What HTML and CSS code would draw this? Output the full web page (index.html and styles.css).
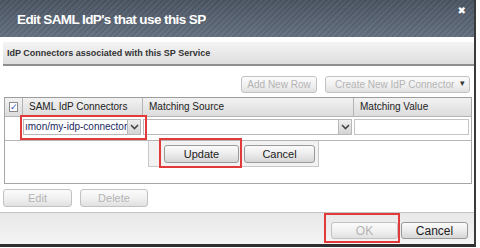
FILE: index.html
```html
<!DOCTYPE html>
<html lang="en">
<head>
  <meta charset="UTF-8">
  <title>Edit SAML IdP's that use this SP</title>
  <link rel="stylesheet" href="styles.css">
</head>
<body>
  <div class="dialog">
    <div class="titlebar">
      <h1>Edit SAML IdP's that use this SP</h1>
      <span class="close">&#x2716;</span>
    </div>

    <div class="content">
      <div class="section-header">IdP Connectors associated with this SP Service</div>

      <div class="toolbar">
        <button class="btn btn-disabled add-row">Add New Row</button>
        <button class="btn btn-disabled create-conn">Create New IdP Connector <span class="caret">&#9662;</span></button>
      </div>

      <div class="grid">
        <div class="grid-row grid-head">
          <div class="cell cell-check"><span class="checkbox">&#10003;</span></div>
          <div class="cell">SAML IdP Connectors</div>
          <div class="cell">Matching Source</div>
          <div class="cell">Matching Value</div>
        </div>
        <div class="grid-row grid-edit">
          <div class="cell cell-check"></div>
          <div class="cell">
            <div class="combo">
              <span class="combo-text">ımon/my-idp-connector</span>
              <span class="combo-arrow"><svg width="9" height="6" viewBox="0 0 9 6"><path d="M1 1 L4.5 4.5 L8 1" fill="none" stroke="#444" stroke-width="1.6"/></svg></span>
            </div>
          </div>
          <div class="cell">
            <div class="combo">
              <span class="combo-text"></span>
              <span class="combo-arrow"><svg width="9" height="6" viewBox="0 0 9 6"><path d="M1 1 L4.5 4.5 L8 1" fill="none" stroke="#444" stroke-width="1.6"/></svg></span>
            </div>
          </div>
          <div class="cell">
            <div class="text-input"></div>
          </div>
        </div>
        <div class="row-editor">
          <button class="btn">Update</button>
          <button class="btn">Cancel</button>
        </div>
      </div>

      <div class="actions">
        <button class="btn btn-disabled small">Edit</button>
        <button class="btn btn-disabled small">Delete</button>
      </div>
    </div>

    <div class="footer">
      <button class="btn btn-disabled footer-btn">OK</button>
      <button class="btn footer-btn">Cancel</button>
    </div>

    <div class="mark mark-select"></div>
    <div class="mark mark-update"></div>
    <div class="mark mark-ok"></div>
  </div>
</body>
</html>
```

FILE: styles.css
```css
* {
  box-sizing: border-box;
  margin: 0;
  padding: 0;
}

body {
  background: #ffffff;
  font-family: "Liberation Sans", Arial, sans-serif;
  width: 480px;
  height: 248px;
  overflow: hidden;
}

.dialog {
  position: relative;
  width: 476px;
  height: 247px;
  background: #ffffff;
  border-right: 2px solid #3a3a3a;
  border-bottom: 3px solid #2f2f2f;
  display: flex;
  flex-direction: column;
}

.titlebar {
  height: 37px;
  display: flex;
  align-items: center;
  justify-content: space-between;
  padding: 0 8px 0 17px;
  background:
    repeating-linear-gradient(135deg, rgba(255,255,255,0.04) 0 2px, rgba(0,0,0,0.04) 2px 4px),
    linear-gradient(#4a5462, #647080);
}

.titlebar h1 {
  color: #ffffff;
  font-size: 13.5px;
  letter-spacing: -0.6px;
  font-weight: bold;
  margin-top: 2px;
}

.close {
  color: #ffffff;
  font-size: 10px;
  font-family: "DejaVu Sans", sans-serif;
  align-self: flex-start;
  margin-top: 5px;
}

.content {
  padding: 5px 0 0 3px;
  flex: 1;
}

.section-header {
  height: 24px;
  padding-left: 4px;
  line-height: 23px;
  font-size: 9px;
  font-weight: bold;
  color: #333;
  background: linear-gradient(#f4f4f4, #dedede);
  border-bottom: 2px solid #8e8e8e;
}

.toolbar {
  display: flex;
  justify-content: flex-end;
  gap: 8px;
  padding: 10px 4px 0 0;
  height: 29px;
}

.btn {
  font-family: "Liberation Sans", Arial, sans-serif;
  font-size: 11px;
  color: #222;
  height: 18px;
  border: 1px solid #9a9a9a;
  border-radius: 3px;
  background: linear-gradient(#fbfbfb 0%, #ececec 50%, #d6d6d6 100%);
}

.btn-disabled {
  color: #b4b4b4;
  border-color: #c2c2c2;
  background: linear-gradient(#fbfbfb 0%, #f0f0f0 55%, #e0e0e0 100%);
}

.add-row {
  width: 76px;
  height: 17px;
  font-size: 10px;
}

.create-conn {
  width: 145px;
  height: 17px;
  text-align: left;
  padding-left: 9px;
  font-size: 10px;
  position: relative;
}

.caret {
  position: absolute;
  right: 4px;
  top: 1px;
  color: #333;
  font-size: 9px;
}

.grid {
  margin: 2px 2px 0 1px;
  height: 87px;
  border: 1px solid #a6a6a6;
  border-top-color: #9c9c9c;
}

.grid-row {
  display: grid;
  grid-template-columns: 18px 120px 211px 1fr;
}

.grid-head {
  height: 19px;
  background: linear-gradient(#f2f2f2, #dcdcdc);
  border-bottom: 1px solid #b5b5b5;
  font-size: 10px;
  color: #222;
}

.grid-head .cell {
  border-right: 1px solid #b5b5b5;
  padding-left: 6px;
  line-height: 18px;
}

.grid-head .cell:last-child {
  border-right: none;
}

.cell-check {
  display: flex;
  align-items: center;
  justify-content: center;
}

.grid-head .cell-check {
  padding-left: 0;
}

.checkbox {
  width: 9px;
  height: 10px;
  border: 1px solid #8a8a8a;
  background: #fff;
  color: #3350c0;
  font-size: 9px;
  line-height: 8px;
  text-align: center;
  font-family: "DejaVu Sans", sans-serif;
}

.grid-edit {
  height: 24px;
  padding-top: 2px;
  border-bottom: 1px solid #b5b5b5;
}

.grid-edit .cell {
  padding-right: 2px;
}

.combo {
  display: flex;
  height: 16px;
  border: 1px solid #b8b8b8;
  background: #fff;
}

.combo-text {
  flex: 1;
  font-size: 10px;
  line-height: 14px;
  padding-left: 1px;
  color: #1a2a60;
  overflow: hidden;
  white-space: nowrap;
}

.combo-arrow {
  width: 13px;
  flex: none;
  display: flex;
  align-items: center;
  justify-content: center;
  background: linear-gradient(#eeeeee, #d4d4d4);
  border-left: 1px solid #b8b8b8;
}

.text-input {
  height: 16px;
  border: 1px solid #c4c4c4;
  background: #fff;
}

.row-editor {
  display: flex;
  gap: 5px;
  width: 171px;
  height: 26px;
  margin-left: 143px;
  padding: 4px 0 0 15px;
  background: #f2f2f2;
  border: 1px solid #c8c8c8;
  border-top: none;
}

.row-editor .btn {
  width: 75px;
}

.row-editor .btn + .btn {
  width: 71px;
}

.actions {
  display: flex;
  gap: 8px;
  padding-top: 5px;
}

.small {
  width: 69px;
  height: 18px;
}

.small + .small {
  width: 68px;
}

.footer {
  height: 32px;
  display: flex;
  justify-content: flex-end;
  align-items: flex-end;
  gap: 3px;
  padding: 0 6px 5px 0;
  background: linear-gradient(#e8e8e8, #f4f4f4);
  border-top: 1px solid #c4c4c4;
}

.footer-btn {
  width: 67px;
  height: 17px;
  font-size: 12px;
}

.mark {
  position: absolute;
  border: 2px solid #e23a3a;
}

.mark-select {
  left: 20px;
  top: 115px;
  width: 127px;
  height: 25px;
}

.mark-update {
  left: 159px;
  top: 138px;
  width: 83px;
  height: 30px;
}

.mark-ok {
  left: 324px;
  top: 213px;
  width: 76px;
  height: 30px;
}
```
